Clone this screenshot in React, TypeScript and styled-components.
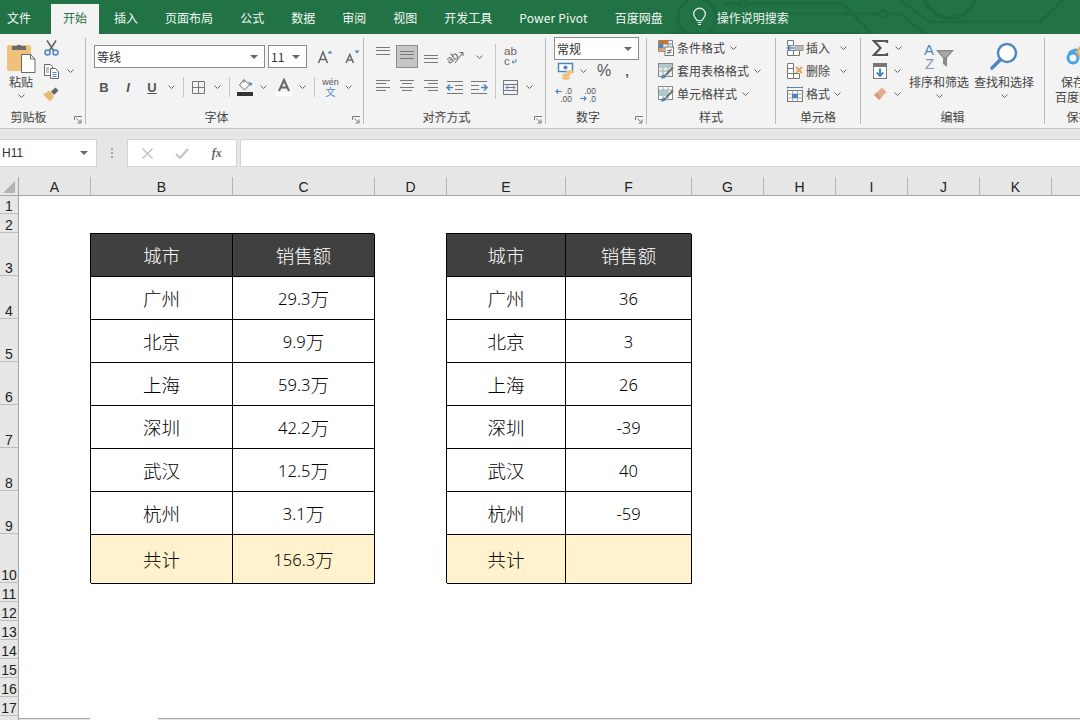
import React from 'react';
import styled, { createGlobalStyle } from 'styled-components';

const CJK = `'Noto Sans CJK SC', 'Liberation Sans', sans-serif`;
const BLUE = '#4a87c2';
const ORANGE = '#e5a25a';

const GlobalStyle = createGlobalStyle`
	html, body {
		margin: 0;
		width: 1080px;
		height: 720px;
		overflow: hidden;
		background: #fff;
		font-family: ${CJK};
	}
	#root { height: 720px; }
`;

const Page = styled.div`
	display: flex;
	flex-direction: column;
	width: 1080px;
	height: 720px;
	overflow: hidden;
`;

/* title bar + tabs */
const TabBar = styled.div`
	position: relative;
	display: flex;
	gap: 3px;
	flex: none;
	height: 34px;
	background: #217346;
	overflow: hidden;
`;

const Circuit = styled.svg`
	position: absolute;
	top: 0;
	left: 670px;
`;

const Tab = styled.div<{ $active?: boolean; $first?: boolean }>`
	position: relative;
	display: flex;
	align-items: center;
	justify-content: center;
	flex: none;
	margin-top: 4px;
	height: 30px;
	box-sizing: border-box;
	padding: ${(p) => (p.$first ? '0 17px 4px 7px' : '0 12px 4px')};
	font-size: 12px;
	letter-spacing: ${(p) => (p.$first ? 0 : 0.01)}px;
	color: ${(p) => (p.$active ? '#217346' : '#f4f8f5')};
	background: ${(p) => (p.$active ? '#f3f3f3' : 'transparent')};
`;

const LatinTab = styled(Tab)`
	letter-spacing: 0.15px;
`;

const SearchHint = styled.div`
	position: relative;
	display: flex;
	align-items: center;
	gap: 11px;
	margin: 0 0 0 15px;
	font-size: 12px;
	color: #eef5f0;
`;

/* ribbon */
const Ribbon = styled.div`
	display: flex;
	flex: none;
	height: 95px;
	padding-top: 4px;
	box-sizing: border-box;
	background: #f3f3f3;
	border-bottom: 1px solid #c6c6c6;
`;

const Group = styled.section<{ $w: number }>`
	display: flex;
	flex-direction: column;
	flex: none;
	width: ${(p) => p.$w}px;
	height: 86px;
	box-sizing: border-box;
	border-right: 1px solid #b9b9b9;
`;

const GroupBody = styled.div<{ $left?: number }>`
	display: flex;
	flex: none;
	height: 70px;
	padding-left: ${(p) => p.$left ?? 0}px;
`;

const Footer = styled.div`
	display: flex;
	height: 16px;
`;

const GroupLabel = styled.div<{ $pad?: number }>`
	flex: 1;
	padding-right: ${(p) => p.$pad ?? 0}px;
	font-size: 12px;
	line-height: 18px;
	text-align: center;
	color: #444;
`;

const Launcher = styled.div`
	display: flex;
	align-items: flex-end;
	justify-content: flex-end;
	width: 16px;
	padding-right: 3px;
	box-sizing: border-box;
`;

const Column = styled.div<{ $w?: number; $top?: number; $gap?: number }>`
	display: flex;
	flex-direction: column;
	flex: none;
	${(p) => (p.$w ? `width: ${p.$w}px;` : '')}
	margin-top: ${(p) => p.$top ?? 0}px;
	gap: ${(p) => p.$gap ?? 0}px;
`;

const RowLine = styled.div<{ $h?: number; $top?: number; $gap?: number }>`
	display: flex;
	align-items: center;
	flex: none;
	height: ${(p) => p.$h ?? 20}px;
	margin-top: ${(p) => p.$top ?? 0}px;
	gap: ${(p) => p.$gap ?? 0}px;
`;

const Slot = styled.div<{ $w: number; $active?: boolean }>`
	display: flex;
	align-items: center;
	justify-content: center;
	flex: none;
	width: ${(p) => p.$w}px;
	height: 100%;
	box-sizing: border-box;
	${(p) => (p.$active ? 'background: #c6c6c6; border: 1px solid #8f8f8f;' : '')}
`;

const Sep = styled.div`
	width: 1px;
	height: 20px;
	background: #c4c4c4;
`;

const TallSep = styled.div`
	flex: none;
	width: 1px;
	height: 55px;
	margin: 6px 0 0 4px;
	background: #c4c4c4;
`;

const Combo = styled.div<{ $w: number; $h?: number }>`
	display: flex;
	align-items: center;
	justify-content: space-between;
	flex: none;
	width: ${(p) => p.$w}px;
	height: ${(p) => p.$h ?? 23}px;
	padding: 0 6px 0 2px;
	box-sizing: border-box;
	background: #fff;
	border: 1px solid #8c8c8c;
	font-size: 12px;
	color: #333;
`;

const Glyph = styled.span<{ $italic?: boolean; $under?: boolean }>`
	font: ${(p) => (p.$italic ? 'italic' : 'normal')} bold 13px 'Liberation Sans', sans-serif;
	text-decoration: ${(p) => (p.$under ? 'underline' : 'none')};
	color: #555;
`;

const NumberGlyph = styled.span`
	font: 16px 'Liberation Sans', sans-serif;
	color: #555;
`;

const Caption = styled.span<{ $gap?: number }>`
	margin: -2px ${(p) => p.$gap ?? 0}px 0 0;
	font-size: 12px;
	line-height: 15px;
	color: #444;
	white-space: nowrap;
`;

const BigButton = styled.div<{ $w: number }>`
	display: flex;
	flex-direction: column;
	align-items: center;
	flex: none;
	width: ${(p) => p.$w}px;
`;

const IconBox = styled.div<{ $pb?: number }>`
	display: flex;
	align-items: flex-end;
	justify-content: center;
	height: 32px;
	margin-top: 3px;
	padding-bottom: ${(p) => p.$pb ?? 0}px;
	box-sizing: border-box;
`;

const BigCaption = styled.div`
	margin-top: 1px;
	font-size: 12px;
	line-height: 15px;
	text-align: center;
	white-space: nowrap;
	color: #444;
`;

const BigChevron = styled.div`
	display: flex;
	justify-content: center;
	margin-top: 5px;
`;

/* formula bar */
const FormulaBar = styled.div`
	display: flex;
	flex: none;
	height: 48px;
	padding-top: 10px;
	box-sizing: border-box;
	background: #e6e6e6;
`;

const NameBox = styled.div`
	display: flex;
	align-items: center;
	justify-content: space-between;
	flex: none;
	width: 97px;
	height: 28px;
	padding: 0 8px 0 2px;
	box-sizing: border-box;
	background: #fff;
	border: 1px solid #d4d4d4;
	border-left: none;
	font: 12px 'Liberation Sans', sans-serif;
	color: #333;
`;

const Grip = styled.div`
	display: flex;
	flex-direction: column;
	justify-content: center;
	gap: 2px;
	height: 28px;
	margin: 0 14px;
	width: 2px;
	i {
		display: block;
		width: 2px;
		height: 2px;
		background: #a6a6a6;
	}
`;

const FormulaButtons = styled.div`
	display: flex;
	align-items: center;
	justify-content: space-around;
	flex: none;
	width: 110px;
	height: 28px;
	padding: 0 3px;
	box-sizing: border-box;
	background: #fff;
	border: 1px solid #d4d4d4;
`;

const Fx = styled.span`
	font: italic bold 12px 'Liberation Serif', serif;
	color: #666;
`;

const FormulaInput = styled.div`
	flex: 1;
	height: 28px;
	margin-left: 3px;
	box-sizing: border-box;
	background: #fff;
	border: 1px solid #d4d4d4;
	border-right: none;
`;

/* sheet */
const Sheet = styled.div`
	display: grid;
	flex: none;
	grid-template-columns: 19px 71px 142px 142px 72px 119px 126px repeat(6, 72px);
	grid-template-rows: 19px 18px 19px repeat(7, 43px) 49px repeat(7, 19px);
	width: 1080px;
	overflow: hidden;
`;

const Corner = styled.div`
	display: flex;
	align-items: flex-end;
	justify-content: flex-end;
	padding: 0 3px 2px 0;
	background: #e6e6e6;
	border-right: 1px solid #a6a6a6;
	border-bottom: 1px solid #a6a6a6;
`;

const ColHead = styled.div<{ $first?: boolean }>`
	display: flex;
	align-items: center;
	justify-content: center;
	padding-top: 1px;
	box-sizing: border-box;
	background: #e6e6e6;
	border-left: ${(p) => (p.$first ? 'none' : '1px solid #b5b5b5')};
	border-bottom: 1px solid #a6a6a6;
	font: 14px 'Liberation Sans', sans-serif;
	color: #222;
`;

const RowHead = styled.div`
	display: flex;
	align-items: flex-end;
	justify-content: center;
	box-sizing: border-box;
	background: #e6e6e6;
	border-right: 1px solid #a6a6a6;
	border-bottom: 1px solid #bdbdbd;
	font: 14px/14px 'Liberation Sans', sans-serif;
	color: #222;
	overflow: hidden;
`;

type CellKind = 'none' | 'head' | 'body' | 'total';

const Cell = styled.div<{ $kind: CellKind }>`
	display: flex;
	align-items: center;
	justify-content: center;
	padding: 1px 0 0 1px;
	box-sizing: border-box;
	font-size: 18.5px;
	font-weight: 300;
	font-family: 'Noto Sans', ${CJK};
	color: ${(p) => (p.$kind === 'head' ? '#fff' : '#000')};
	background: ${(p) =>
		p.$kind === 'head' ? '#404040' : p.$kind === 'total' ? '#fff2cc' : 'transparent'};
	${(p) => (p.$kind === 'none' ? '' : 'box-shadow: inset 1px 1px 0 #000, 1px 1px 0 #000;')}
`;

const Digits = styled.span`
	font-size: 16.5px;
`;

const SheetFoot = styled.div`
	display: flex;
	flex: 1;
`;

const FootGutter = styled.div`
	flex: none;
	width: 18px;
	background: #e6e6e6;
	border-right: 1px solid #a6a6a6;
`;

const SheetTabs = styled.div`
	display: flex;
	flex: 1;
	margin-top: 2px;
	background: #e6e6e6;
	border-top: 1px solid #a6a6a6;
`;

const ActiveSheet = styled.div`
	width: 68px;
	margin: -1px 0 0 71px;
	background: #fff;
`;

const Shifted = styled.div<{ $y: number }>`
	margin-top: ${(p) => p.$y * 2}px;
`;

const Svg: React.FC<{ w: number; h: number; children: React.ReactNode }> = ({ w, h, children }) => (
	<svg width={w} height={h} viewBox={`0 0 ${w} ${h}`} style={{ display: 'block', flex: 'none', overflow: 'visible' }}>
		{children}
	</svg>
);

const Chev = () => (
	<Svg w={7} h={4}>
		<path d="M.5.5 3.500 3.500 6.500.5" fill="none" stroke="#666" />
	</Svg>
);

const Caret = () => (
	<Svg w={8} h={4}>
		<path d="M0 0h8L4 4z" fill="#666" />
	</Svg>
);

const LauncherIcon = () => (
	<Svg w={8} h={8}>
		<path d="M.5 4V.5h7.400M2.500 2.500l4 4M3.500 7h3.500V3.500" fill="none" stroke="#777" />
	</Svg>
);

const PasteIcon = () => (
	<Svg w={29} h={31}>
		<rect x="0" y="3" width="24" height="26" rx="2" fill="#eec27b" />
		<path d="M5 8V4h4.500a3 3 0 0 1 5 0H19v4z" fill="#6b6b6b" />
		<path d="M14.500 12.500h9l4.500 4.500v13.500h-13.500z" fill="#fff" stroke="#6a6a6a" />
		<path d="M23.500 12.500v4.500h4.500" fill="none" stroke="#6a6a6a" />
	</Svg>
);

const ScissorsIcon = () => (
	<Svg w={15} h={16}>
		<path d="M3 .5l6.500 10M12 .5L5.500 10.500" fill="none" stroke="#666" strokeWidth="1.600" />
		<circle cx="3.500" cy="12.500" r="2.500" fill="none" stroke={BLUE} strokeWidth="1.500" />
		<circle cx="11.500" cy="12.500" r="2.500" fill="none" stroke={BLUE} strokeWidth="1.500" />
	</Svg>
);

const CopyIcon = () => (
	<Svg w={15} h={15}>
		<path d="M.5.5h6l2 2v9h-8z" fill="#fff" stroke="#666" />
		<path d="M6.500 4.500h5l3 3v7h-8z" fill="#fff" stroke="#666" />
		<path d="M8.500 8.500h4M8.500 10.500h4M8.500 12.500h4" stroke={BLUE} />
		<path d="M2 4h3M2 6h3M2 8h3" stroke="#888" />
	</Svg>
);

const BrushIcon = () => (
	<Svg w={16} h={15}>
		<path d="M8 4.500 12.500.5 15.500 3.500 11 8z" fill="#666" />
		<path d="M0 7.500 6.500 3.500 11 9.500 7 14.500z" fill="#e9bb72" />
	</Svg>
);

const GrowIcon: React.FC<{ up?: boolean }> = ({ up }) => (
	<Svg w={15} h={14}>
		<path d={up ? 'M.5 13 5 2l4.500 11M2.200 9.500h5.600' : 'M1 13 4.800 4.500 8.500 13M2.400 10h4.800'} fill="none" stroke="#666" strokeWidth="1.500" />
		<path d={up ? 'M9.500 3.500 12 .5l2.500 3z' : 'M9.500 .5h5L12 3.500z'} fill={BLUE} />
	</Svg>
);

const BorderIcon = () => (
	<Svg w={13} h={13}>
		<path d="M.5.5h12v12H.5zM6.500.5v12M.5 6.500h12" fill="none" stroke="#777" />
	</Svg>
);

const FillIcon = () => (
	<Svg w={17} h={17}>
		<path d="M7 .5 12.500 6 7.500 11 2.500 6z" fill="#fff" stroke="#666" />
		<path d="M7 1V4" stroke="#666" />
		<path d="M11 2.500 15.500 4.500 14 7z" fill={BLUE} />
		<rect x="0" y="13" width="16" height="4" fill="#333" />
	</Svg>
);

const FontColorIcon = () => (
	<Svg w={16} h={17}>
		<path d="M3 12 8 1l5 11M5 8.500h6" fill="none" stroke="#666" strokeWidth="2" />
		<rect x="0" y="13" width="16" height="4" fill="#fff" />
	</Svg>
);

const WenIcon = () => (
	<Svg w={17} h={18}>
		<text x="8.500" y="7" textAnchor="middle" fontSize="9" fontFamily="Liberation Sans" fill="#555">wén</text>
		<text x="8.500" y="18" textAnchor="middle" fontSize="10" fontFamily={CJK} fill={BLUE}>文</text>
	</Svg>
);

const LinesIcon: React.FC<{ widths: number[]; aligns?: 'l' | 'c' | 'r'; w?: number }> = ({ widths, aligns = 'c', w = 14 }) => (
	<Svg w={w} h={widths.length * 3.4}>
		{widths.map((lw, i) => {
			const x = aligns === 'l' ? 0 : aligns === 'r' ? w - lw : (w - lw) / 2;
			return <path key={i} d={`M${x} ${Math.round(i * 3.4) + 0.5}h${lw}`} stroke="#777" />;
		})}
	</Svg>
);

const OrientIcon = () => (
	<Svg w={18} h={16}>
		<text x="0" y="13" fontSize="11" fontFamily="Liberation Sans" fill="#666" transform="rotate(-35 5 9)">ab</text>
		<path d="M9 14 16.500 4M13.500 3.500h3.500V7" fill="none" stroke="#666" />
	</Svg>
);

const WrapIcon = () => (
	<Svg w={13} h={21}>
		<text x="0" y="9" fontSize="11.500" fontFamily="Liberation Sans" fill="#666">ab</text>
		<text x="0" y="19" fontSize="11.500" fontFamily="Liberation Sans" fill="#666">c</text>
		<path d="M12 13v3H8M9.500 14.500 8 16l1.500 1.500" fill="none" stroke={BLUE} />
	</Svg>
);

const IndentIcon: React.FC<{ flip?: boolean }> = ({ flip }) => (
	<Svg w={16} h={13}>
		<g transform={flip ? 'translate(16 0) scale(-1 1)' : undefined}>
			<path d="M0 .5h16M8 4.500h8M8 8.500h8M0 12.500h16" stroke="#777" />
			<path d="M0 6.500h6M3 3.500l-3 3 3 3" fill="none" stroke={BLUE} strokeWidth="1.500" />
		</g>
	</Svg>
);

const MergeIcon = () => (
	<Svg w={15} h={15}>
		<path d="M.5.5h14v14H.5zM.5 4.500h14M.5 10.500h14" fill="none" stroke="#777" />
		<path d="M3 7.500h9M5 5.500l-2 2 2 2M10 5.500l2 2-2 2" fill="none" stroke={BLUE} />
	</Svg>
);

const MoneyIcon = () => (
	<Svg w={17} h={17}>
		<rect x=".5" y=".5" width="14" height="8" fill="#fff" stroke={BLUE} strokeWidth="1.500" />
		<circle cx="7.500" cy="4.500" r="2" fill={BLUE} />
		<ellipse cx="12" cy="9" rx="4" ry="1.800" fill="#eec27b" />
		<ellipse cx="8" cy="12" rx="4" ry="1.800" fill="#eec27b" />
		<ellipse cx="8" cy="15" rx="4" ry="1.800" fill="#eec27b" />
	</Svg>
);

const DecimalIcon: React.FC<{ more?: boolean }> = ({ more }) => (
	<Svg w={16} h={15}>
		<text x="16" y="6.500" textAnchor="end" fontSize="8.500" fontFamily="Liberation Sans" fill="#555">{more ? '.00' : '.0'}</text>
		<text x="16" y="14.500" textAnchor="end" fontSize="8.500" fontFamily="Liberation Sans" fill="#555">{more ? '.0' : '.00'}</text>
		{more ? (
			<path d="M0 11.500h6M4 9.500l2 2-2 2" fill="none" stroke={BLUE} strokeWidth="1.200" />
		) : (
			<path d="M6 4.500H0M2 2.500l-2 2 2 2" fill="none" stroke={BLUE} strokeWidth="1.200" />
		)}
	</Svg>
);

const CondIcon = () => (
	<Svg w={16} h={16}>
		<path d="M.5.500h14v11H.5zM5 .5v11M10 .5v11M.5 4h14M.5 8h14" fill="none" stroke="#888" />
		<rect x="1" y="1" width="9" height="3" fill="#c8742a" />
		<rect x="1" y="4" width="4" height="4" fill={BLUE} />
		<rect x="1" y="8" width="4" height="3.500" fill="#e5a25a" />
		<rect x="7" y="7" width="8.500" height="8.500" fill="#fff" stroke="#777" />
		<path d="M9 10.500h4.500M9 12.500h4.500M10 14l3.500-5" fill="none" stroke="#555" strokeWidth=".8" />
	</Svg>
);

const TableStyleIcon: React.FC<{ plain?: boolean }> = ({ plain }) => (
	<Svg w={16} h={16}>
		<rect x=".5" y=".5" width="14" height="13" fill={plain ? '#fff' : '#e6eeee'} stroke="#888" />
		<path d="M.5 4h14M.5 8h14M5 .5v13M10 .5v13" stroke="#aaa" />
		<rect x="1" y={plain ? 4 : 1} width={plain ? 9 : 13} height={plain ? 6 : 3} fill="#a9cbcb" />
		<path d="M15.500 5 9 12l-2 1 1-2.500L14 4z" fill="#666" />
		<path d="M3 15.500c0-3 2-4.500 5-4 .5 2.500-1 4.500-5 4z" fill={BLUE} />
	</Svg>
);

const CellsInsertIcon = () => (
	<Svg w={16} h={16}>
		<path d="M.5.5h6v5h-6zM.5 10.500h6v5h-6zM6.500 10.500h6v5h-6z" fill="#fff" stroke="#777" />
		<rect x="8" y="5.500" width="8" height="5" fill="#bbb" stroke="#999" />
		<path d="M7 8H0M3 5.500 .5 8 3 10.500" fill="none" stroke={BLUE} strokeWidth="1.500" />
	</Svg>
);

const CellsDeleteIcon = () => (
	<Svg w={16} h={16}>
		<path d="M.5.5h6v5h-6zM.5 10.500h6v5h-6zM6.500 10.500h6v5h-6zM.5 5.500h6v5h-6z" fill="#fff" stroke="#777" />
		<path d="M9 4l6 6M15 4l-6 6" stroke={ORANGE} strokeWidth="2" />
	</Svg>
);

const CellsFormatIcon = () => (
	<Svg w={16} h={16}>
		<path d="M.5 .5v2M15.500 .5v2M1 1.500h14" stroke={BLUE} />
		<rect x=".5" y="4.500" width="15" height="11" fill="#fff" stroke="#777" />
		<path d="M.5 8h15M.5 12h15M5.500 4.500v11M10.500 4.500v11" stroke="#aaa" />
		<rect x="5" y="8" width="6" height="4" fill={BLUE} />
	</Svg>
);

const SumIcon = () => (
	<Svg w={16} h={16}>
		<path d="M15 3V1H2l6.500 7L2 15h13v-2" fill="none" stroke="#555" strokeWidth="2.200" />
	</Svg>
);

const FillDownIcon = () => (
	<Svg w={14} h={16}>
		<rect x=".5" y=".5" width="13" height="15" fill="#fff" stroke="#777" />
		<rect x="1" y="1" width="12" height="3" fill="#777" />
		<path d="M7 5.500v7M3.800 9.500 7 13l3.200-3.500" fill="none" stroke={BLUE} strokeWidth="2" />
	</Svg>
);

const EraserIcon = () => (
	<Svg w={14} h={14}>
		<path d="M9 .5l4.500 4.500L6 12.500 1 8z" fill="#e2ad90" />
		<path d="M3.500 5.500 8.500 10.500 6 13 1 8z" fill="#d99a7c" />
	</Svg>
);

const SortIcon = () => (
	<Svg w={31} h={28}>
		<text x="0" y="13" fontSize="15" fontFamily="Liberation Sans" fill={BLUE}>A</text>
		<text x="1" y="27" fontSize="15" fontFamily="Liberation Sans" fill="#8b96b5">Z</text>
		<path d="M12 8h18l-7 8v9l-4-3v-6z" fill="#8a8a8a" />
		<path d="M15 9.500h12l-5 5.500h-2z" fill="#aaa" />
	</Svg>
);

const FindIcon = () => (
	<Svg w={28} h={28}>
		<circle cx="17" cy="11" r="9" fill="#fff" stroke={BLUE} strokeWidth="2.400" />
		<path d="M10.500 17.500 2 26" stroke={BLUE} strokeWidth="3.500" strokeLinecap="round" />
	</Svg>
);

const LinkIcon = () => (
	<Svg w={26} h={20}>
		<circle cx="7" cy="13" r="5" fill="none" stroke="#4aa3e0" strokeWidth="3" />
		<circle cx="17" cy="7" r="5" fill="none" stroke="#e8b066" strokeWidth="3" />
		<path d="M3 9c2-3 5-4 8-4" fill="none" stroke="#4aa3e0" strokeWidth="3" />
	</Svg>
);

const BulbIcon = () => (
	<Svg w={13} h={18}>
		<path d="M4 12.500C3 10 .7 9 .7 6a5.800 5.800 0 0 1 11.600 0c0 3-2.300 4-3.300 6.500z" fill="none" stroke="#f2f6f3" strokeWidth="1.200" />
		<path d="M4.500 14.500h4M5 16.500h3" stroke="#f2f6f3" strokeWidth="1.200" />
	</Svg>
);

const CancelIcon = () => (
	<Svg w={11} h={11}>
		<path d="M.5.5l10 10M10.500.5l-10 10" stroke="#c4c4c4" strokeWidth="1.500" />
	</Svg>
);

const CheckIcon = () => (
	<Svg w={14} h={11}>
		<path d="M1 6l4 4 8-9" fill="none" stroke="#c4c4c4" strokeWidth="2.200" />
	</Svg>
);

const tabs = ['开始', '插入', '页面布局', '公式', '数据', '审阅', '视图', '开发工具'];
const colNames = ['A', 'B', 'C', 'D', 'E', 'F', 'G', 'H', 'I', 'J', 'K', 'L'];
const rowCount = 17;

const cities = ['广州', '北京', '上海', '深圳', '武汉', '杭州'];
const sales = ['29.3', '9.9', '59.3', '42.2', '12.5', '3.1'];
const deltas = ['36', '3', '26', '-39', '40', '-59'];

// sheet row (1 based) and column index (0 based) -> what the cell shows
const tableCell = (row: number, col: number): { kind: CellKind; text: React.ReactNode } => {
	const isTable = row >= 3 && row <= 10 && [1, 2, 4, 5].includes(col);
	if (!isTable) return { kind: 'none', text: null };
	const kind: CellKind = row === 3 ? 'head' : row === 10 ? 'total' : 'body';
	const first = col === 1 || col === 4;
	if (row === 3) return { kind, text: first ? '城市' : '销售额' };
	if (row === 10) {
		if (first) return { kind, text: '共计' };
		return { kind, text: col === 2 ? <><Digits>156.3</Digits>万</> : null };
	}
	const i = row - 4;
	if (first) return { kind, text: cities[i] };
	return { kind, text: col === 2 ? <><Digits>{sales[i]}</Digits>万</> : <Digits>{deltas[i]}</Digits> };
};

const App: React.FC = () => (
	<Page>
		<GlobalStyle />
		<TabBar>
			<Circuit width="410" height="34" viewBox="0 0 410 34" fill="none" stroke="#1e6a40" strokeWidth="2.500">
				<circle cx="27" cy="17" r="19" strokeWidth="3" />
				<path d="M0 33H190M55 3.500h17M76 3.500h96l30 30" />
				<circle cx="73" cy="3" r="3.500" />
				<path d="M115 14h94M217 14h14l24 20" />
				<circle cx="213" cy="14" r="3.500" />
				<path d="M230 0l30 22h110l23-22" />
				<circle cx="280" cy="-8" r="26" strokeWidth="4" />
			</Circuit>
			<Tab $first>文件</Tab>
			{tabs.map((t, i) => (
				<Tab key={t} $active={i === 0}>{t}</Tab>
			))}
			<LatinTab>Power Pivot</LatinTab>
			<Tab>百度网盘</Tab>
			<SearchHint>
				<BulbIcon />
				操作说明搜索
			</SearchHint>
		</TabBar>

		<Ribbon>
			<Group $w={86}>
				<GroupBody $left={7}>
					<BigButton $w={28}>
						<IconBox><PasteIcon /></IconBox>
						<BigCaption>粘贴</BigCaption>
						<BigChevron><Chev /></BigChevron>
					</BigButton>
					<Column $w={40} $gap={3}>
						<RowLine><Slot $w={32}><ScissorsIcon /></Slot></RowLine>
						<RowLine><Slot $w={32}><CopyIcon /></Slot><Chev /></RowLine>
						<RowLine><Slot $w={32}><BrushIcon /></Slot></RowLine>
					</Column>
				</GroupBody>
				<Footer><GroupLabel $pad={12}>剪贴板</GroupLabel><Launcher><LauncherIcon /></Launcher></Footer>
			</Group>

			<Group $w={278}>
				<GroupBody $left={8}>
					<Column>
						<RowLine $h={23} $top={7} $gap={3}>
							<Combo $w={171}>等线<Caret /></Combo>
							<Combo $w={39}>11<Caret /></Combo>
							<Slot $w={30}><GrowIcon up /></Slot>
							<Slot $w={19}><GrowIcon /></Slot>
						</RowLine>
						<RowLine $top={9}>
							<Slot $w={20}><Glyph>B</Glyph></Slot>
							<Slot $w={28}><Glyph $italic>I</Glyph></Slot>
							<Slot $w={20}><Glyph $under>U</Glyph></Slot>
							<Slot $w={18}><Chev /></Slot>
							<Slot $w={6}><Sep /></Slot>
							<Slot $w={24}><BorderIcon /></Slot>
							<Slot $w={14}><Chev /></Slot>
							<Slot $w={10}><Sep /></Slot>
							<Slot $w={22}><FillIcon /></Slot>
							<Slot $w={14}><Chev /></Slot>
							<Slot $w={28}><FontColorIcon /></Slot>
							<Slot $w={8}><Chev /></Slot>
							<Slot $w={16}><Sep /></Slot>
							<Slot $w={16}><WenIcon /></Slot>
							<Slot $w={20}><Chev /></Slot>
						</RowLine>
					</Column>
				</GroupBody>
				<Footer><GroupLabel>字体</GroupLabel><Launcher><LauncherIcon /></Launcher></Footer>
			</Group>

			<Group $w={182}>
				<GroupBody $left={7}>
					<Column>
						<RowLine $h={23} $top={7}>
							<Slot $w={24}><Shifted $y={-4}><LinesIcon widths={[14, 14, 14]} /></Shifted></Slot>
							<Slot $w={24}><Slot $w={22} $active><LinesIcon widths={[14, 14, 14]} /></Slot></Slot>
							<Slot $w={24}><Shifted $y={4}><LinesIcon widths={[14, 14, 14]} /></Shifted></Slot>
							<Slot $w={24}><OrientIcon /></Slot>
							<Slot $w={24}><Chev /></Slot>
						</RowLine>
						<RowLine $top={9}>
							<Slot $w={24}><LinesIcon widths={[14, 10, 14, 10]} aligns="l" /></Slot>
							<Slot $w={24}><LinesIcon widths={[14, 10, 14, 10]} /></Slot>
							<Slot $w={24}><LinesIcon widths={[14, 10, 14, 10]} aligns="r" /></Slot>
							<Slot $w={24}><IndentIcon /></Slot>
							<Slot $w={24}><IndentIcon flip /></Slot>
						</RowLine>
					</Column>
					<TallSep />
					<Column>
						<RowLine $h={23} $top={7}><Slot $w={28}><WrapIcon /></Slot></RowLine>
						<RowLine $top={9}><Slot $w={28}><MergeIcon /></Slot><Slot $w={10}><Chev /></Slot></RowLine>
					</Column>
				</GroupBody>
				<Footer><GroupLabel>对齐方式</GroupLabel><Launcher><LauncherIcon /></Launcher></Footer>
			</Group>

			<Group $w={101}>
				<GroupBody $left={8}>
					<Column $top={-1}>
						<Combo $w={85}>常规<Caret /></Combo>
						<RowLine $top={1}>
							<Slot $w={24}><MoneyIcon /></Slot>
							<Slot $w={10}><Chev /></Slot>
							<Slot $w={32}><NumberGlyph>%</NumberGlyph></Slot>
							<Slot $w={14}><Glyph>,</Glyph></Slot>
						</RowLine>
						<RowLine $top={3} $gap={4}>
							<Slot $w={20}><DecimalIcon /></Slot>
							<Slot $w={20}><DecimalIcon more /></Slot>
						</RowLine>
					</Column>
				</GroupBody>
				<Footer><GroupLabel>数字</GroupLabel><Launcher><LauncherIcon /></Launcher></Footer>
			</Group>

			<Group $w={129}>
				<GroupBody $left={11}>
					<Column $gap={3}>
						<RowLine $gap={3}><CondIcon /><Caption $gap={2}>条件格式</Caption><Chev /></RowLine>
						<RowLine $gap={3}><TableStyleIcon /><Caption $gap={2}>套用表格格式</Caption><Chev /></RowLine>
						<RowLine $gap={3}><TableStyleIcon plain /><Caption $gap={2}>单元格样式</Caption><Chev /></RowLine>
					</Column>
				</GroupBody>
				<Footer><GroupLabel>样式</GroupLabel></Footer>
			</Group>

			<Group $w={85}>
				<GroupBody $left={11}>
					<Column $gap={3}>
						<RowLine $gap={3}><CellsInsertIcon /><Caption $gap={7}>插入</Caption><Chev /></RowLine>
						<RowLine $gap={3}><CellsDeleteIcon /><Caption $gap={7}>删除</Caption><Chev /></RowLine>
						<RowLine $gap={3}><CellsFormatIcon /><Caption $gap={1}>格式</Caption><Chev /></RowLine>
					</Column>
				</GroupBody>
				<Footer><GroupLabel>单元格</GroupLabel></Footer>
			</Group>

			<Group $w={184}>
				<GroupBody $left={11}>
					<Column $w={37} $gap={3}>
						<RowLine $gap={7}><SumIcon /><Chev /></RowLine>
						<RowLine $gap={6}><Slot $w={16}><FillDownIcon /></Slot><Chev /></RowLine>
						<RowLine $gap={6}><Slot $w={16}><EraserIcon /></Slot><Chev /></RowLine>
					</Column>
					<BigButton $w={60}>
						<IconBox $pb={3}><SortIcon /></IconBox>
						<BigCaption>排序和筛选</BigCaption>
						<BigChevron><Chev /></BigChevron>
					</BigButton>
					<Slot $w={5} />
					<BigButton $w={60}>
						<IconBox $pb={3}><FindIcon /></IconBox>
						<BigCaption>查找和选择</BigCaption>
						<BigChevron><Chev /></BigChevron>
					</BigButton>
				</GroupBody>
				<Footer><GroupLabel>编辑</GroupLabel></Footer>
			</Group>

			<Group $w={68}>
				<GroupBody>
					<BigButton $w={68}>
						<IconBox $pb={8}><LinkIcon /></IconBox>
						<BigCaption>保存到<br />百度网盘</BigCaption>
					</BigButton>
				</GroupBody>
				<Footer><GroupLabel>保存</GroupLabel></Footer>
			</Group>
		</Ribbon>

		<FormulaBar>
			<NameBox>H11<Caret /></NameBox>
			<Grip><i /><i /><i /></Grip>
			<FormulaButtons>
				<CancelIcon />
				<CheckIcon />
				<Fx>fx</Fx>
			</FormulaButtons>
			<FormulaInput />
		</FormulaBar>

		<Sheet>
			<Corner>
				<Svg w={12} h={12}><path d="M12 0v12H0z" fill="#b4b4b4" /></Svg>
			</Corner>
			{colNames.map((c, i) => (
				<ColHead key={c} $first={i === 0}>{c}</ColHead>
			))}
			{Array.from({ length: rowCount }, (_, r) => r + 1).map((row) => (
				<React.Fragment key={row}>
					<RowHead>{row}</RowHead>
					{colNames.map((c, col) => {
						const { kind, text } = tableCell(row, col);
						return <Cell key={c} $kind={kind}>{text}</Cell>;
					})}
				</React.Fragment>
			))}
		</Sheet>
		<SheetFoot>
			<FootGutter />
			<SheetTabs><ActiveSheet /></SheetTabs>
		</SheetFoot>
	</Page>
);

export default App;
